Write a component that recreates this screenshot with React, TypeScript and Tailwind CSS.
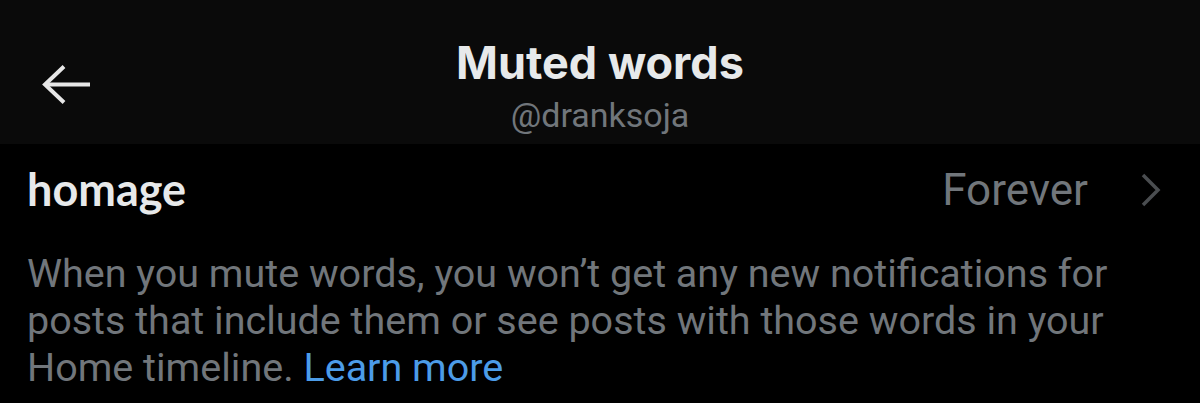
export default function App() {
  return (
    <div className="h-[403px] w-[1200px] overflow-hidden bg-black font-['Roboto',sans-serif]">
      {/* Header */}
      <div className="relative flex h-[144px] flex-col items-center bg-[#0a0a0a] pt-[36px]">
        <button className="absolute left-[40px] top-[62px] text-[#e7e7e7]">
          <svg width="52" height="46" viewBox="0 0 52 46" fill="none" stroke="currentColor" strokeWidth="4">
            <path d="M50 22.5H6" />
            <path d="M24 4.5L5 22.5L24 40.5" />
          </svg>
        </button>
        <h1 className="font-['Inter',sans-serif] text-[45px] leading-[54px] font-bold text-[#e7e9ea]">Muted words</h1>
        <p className="mt-[5px] text-[34px] leading-[40px] text-[#71767b]">@dranksoja</p>
      </div>

      {/* Muted word row */}
      <div className="flex h-[92px] items-center justify-between pl-[27px] pr-[38px]">
        <span className="font-['Lato',sans-serif] text-[45px] font-bold text-[#e7e9ea]">homage</span>
        <div className="flex items-center gap-[52px]">
          <span className="text-[44px] text-[#71767b]">Forever</span>
          <svg width="22" height="36" viewBox="0 0 22 36" fill="none" stroke="#4a4d50" strokeWidth="3.5">
            <path d="M3 3L18 18L3 33" />
          </svg>
        </div>
      </div>

      {/* Description */}
      <p className="mt-[14px] w-[1130px] pl-[27px] text-[39.5px] leading-[47px] text-[#71767b]">
        When you mute words, you won’t get any new notifications for posts that include them or see posts with those words in your Home timeline.{" "}
        <span className="text-[#4c9ce8]">Learn more</span>
      </p>
    </div>
  );
}
